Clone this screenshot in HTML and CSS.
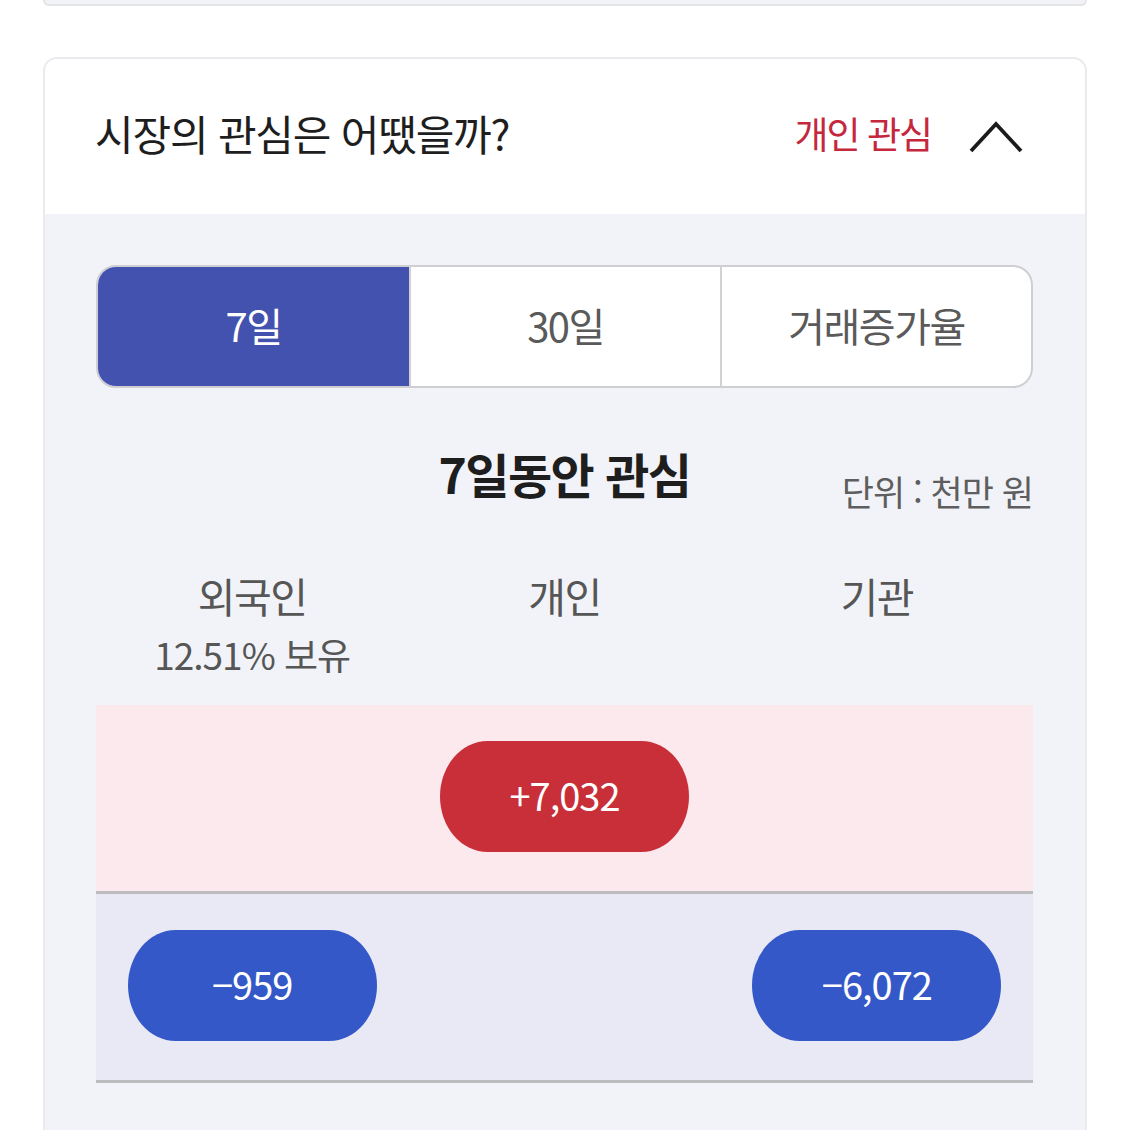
FILE: index.html
```html
<!DOCTYPE html>
<html lang="ko">
<head>
<meta charset="utf-8">
<title>시장의 관심</title>
<link rel="stylesheet" href="styles.css">
</head>
<body>
<div class="page">
  <div class="prev-card"></div>
  <section class="card">
    <header class="card-head">
      <h2 class="card-title">시장의 관심은 어땠을까?</h2>
      <div class="head-right">
        <span class="head-tag">개인 관심</span>
        <svg class="chevron" width="54" height="32" viewBox="0 0 54 32" aria-hidden="true">
          <polyline points="2,30 27,3 52,30" fill="none" stroke="#1b1b1b" stroke-width="3.8" stroke-linejoin="miter"/>
        </svg>
      </div>
    </header>
    <div class="card-body">
      <div class="tabs">
        <div class="tab tab-active">7일</div>
        <div class="tab">30일</div>
        <div class="tab">거래증가율</div>
      </div>
      <div class="chart-head">
        <span></span>
        <h3 class="chart-title">7일동안 관심</h3>
        <span class="unit">단위 : 천만 원</span>
      </div>
      <div class="labels">
        <div class="label"><div class="label-name">외국인</div><div class="label-sub">12.51% 보유</div></div>
        <div class="label"><div class="label-name">개인</div></div>
        <div class="label"><div class="label-name">기관</div></div>
      </div>
      <div class="zone zone-pos">
        <div class="cell"></div>
        <div class="cell"><span class="pill pill-red">+7,032</span></div>
        <div class="cell"></div>
      </div>
      <div class="zone zone-neg">
        <div class="cell"><span class="pill pill-blue">−959</span></div>
        <div class="cell"></div>
        <div class="cell"><span class="pill pill-blue">−6,072</span></div>
      </div>
    </div>
  </section>
</div>
</body>
</html>
```

FILE: styles.css
```css
* { box-sizing: border-box; }
html, body { margin: 0; padding: 0; background: #ffffff; }
body {
  font-family: "Noto Sans CJK KR", "Noto Sans", sans-serif;
  color: #222;
  overflow: hidden;
  height: 1130px;
}
.page { padding: 0 43px; }
.prev-card {
  height: 6px;
  background: #f2f3f7;
  border: 2px solid #e4e4e8;
  border-top: none;
  border-radius: 0 0 12px 12px;
  margin-bottom: 51px;
}
.card {
  border: 2px solid #ebebef;
  border-radius: 14px;
  overflow: hidden;
  background: #f2f3f8;
  height: 1140px;
}
.card-head {
  height: 155px;
  background: #fff;
  display: flex;
  align-items: center;
  justify-content: space-between;
  padding: 0 62px 8px 50px;
}
.card-title {
  margin: 0;
  font-size: 42px;
  font-weight: 400;
  letter-spacing: -1.2px;
  color: #1e1e1e;
}
.head-right { display: flex; align-items: center; gap: 38px; }
.head-tag {
  color: #c5283d;
  font-size: 37px;
  letter-spacing: -2px;
}
.chevron { display: block; margin-top: 8px; }
.card-body { padding: 51px 52px 0 51px; }
.tabs {
  display: grid;
  grid-template-columns: 1fr 1fr 1fr;
  height: 123px;
  border: 2px solid #cfcfd3;
  border-radius: 20px;
  overflow: hidden;
  background: #fff;
}
.tab {
  display: flex;
  align-items: center;
  justify-content: center;
  font-size: 40px;
  letter-spacing: -1.5px;
  color: #5a5a5a;
  border-left: 2px solid #d2d2d6;
  padding-bottom: 4px;
}
.tab:first-child { border-left: none; }
.tab-active { background: #4352ae; color: #fff; }
.chart-head {
  display: grid;
  grid-template-columns: 1fr auto 1fr;
  align-items: end;
  margin-top: 50px;
  height: 70px;
}
.chart-title {
  margin: 0;
  font-size: 48px;
  font-weight: 700;
  letter-spacing: -1.5px;
  color: #1e1e1e;
  line-height: 70px;
}
.unit {
  justify-self: end;
  font-size: 35px;
  letter-spacing: -1px;
  color: #5e5e5e;
  line-height: 50px;
  margin-bottom: -8px;
}
.labels {
  display: grid;
  grid-template-columns: 1fr 1fr 1fr;
  margin-top: 57px;
  height: 140px;
}
.label { text-align: center; }
.label-name {
  font-size: 41px;
  letter-spacing: -1.5px;
  color: #565656;
  line-height: 60px;
}
.label-sub {
  font-size: 37px;
  letter-spacing: -1px;
  color: #565656;
  line-height: 58px;
}
.zone {
  display: grid;
  grid-template-columns: 1fr 1fr 1fr;
  height: 189px;
  border-bottom: 3px solid #bcbcbe;
}
.zone-pos { background: #fbe9ed; }
.zone-neg { background: #e8e9f5; }
.cell { display: flex; align-items: center; justify-content: center; padding-bottom: 4px; }
.pill {
  width: 249px;
  height: 111px;
  border-radius: 48px / 56px;
  display: flex;
  align-items: center;
  justify-content: center;
  color: #fff;
  font-size: 38px;
  letter-spacing: -1px;
  padding-bottom: 4px;
}
.pill-red { background: #c82f38; }
.pill-blue { background: #3558c8; }
```
